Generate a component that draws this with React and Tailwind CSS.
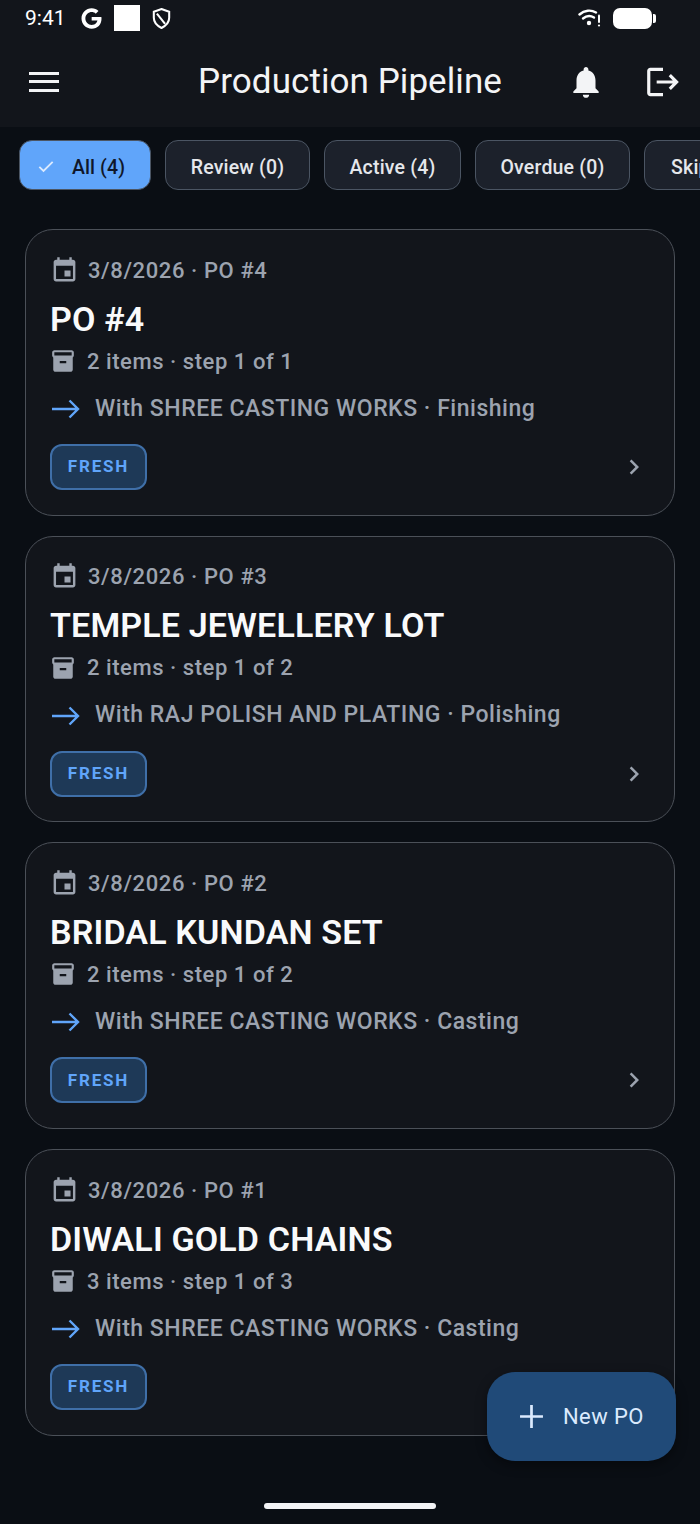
import { FaGoogle } from "react-icons/fa";

const chips = [
  { label: "All (4)", width: "w-[132px]", active: true },
  { label: "Review (0)", width: "w-[145px]" },
  { label: "Active (4)", width: "w-[137px]" },
  { label: "Overdue (0)", width: "w-[155px]" },
  { label: "Skipped (0)", width: "w-[156px]" },
];

const orders = [
  { no: 4, title: "PO #4", items: "2 items · step 1 of 1", route: "With SHREE CASTING WORKS · Finishing" },
  { no: 3, title: "TEMPLE JEWELLERY LOT", items: "2 items · step 1 of 2", route: "With RAJ POLISH AND PLATING · Polishing" },
  { no: 2, title: "BRIDAL KUNDAN SET", items: "2 items · step 1 of 2", route: "With SHREE CASTING WORKS · Casting" },
  { no: 1, title: "DIWALI GOLD CHAINS", items: "3 items · step 1 of 3", route: "With SHREE CASTING WORKS · Casting" },
];

function MaterialIcon({ d, className }) {
  return (
    <svg viewBox="0 0 24 24" fill="currentColor" className={className}>
      <path d={d} />
    </svg>
  );
}

function StatusBar() {
  return (
    <div className="h-[36px] flex items-center justify-between pl-[25px] pr-[44px] text-white">
      <div className="flex items-center">
        <span className="text-[21px] leading-none w-[56px]">9:41</span>
        <FaGoogle className="w-[21px] h-[21px]" />
        <div className="ml-[12px] w-[26px] h-[26px] bg-white" />
        <svg viewBox="1 1 18 20.5" fill="none" stroke="currentColor" strokeWidth="2" className="ml-[12px] w-[19px] h-[21px]">
          <path d="M10 2l7.5 2.6v6c0 4.6-3.2 7.8-7.5 9.9-4.3-2.1-7.5-5.3-7.5-9.9v-6z" />
          <path d="M5.5 6.5l8 10" />
        </svg>
      </div>
      <div className="flex items-center">
        <svg viewBox="0 0 24 20" fill="none" stroke="currentColor" strokeLinecap="round" className="w-[24px] h-[20px]">
          <path d="M1.5 6.5C6.5 2 13 1.5 18 4.5" strokeWidth="2.4" />
          <path d="M5 10.5c3.5-3 7.5-3.2 11-1" strokeWidth="2.4" />
          <circle cx="11" cy="15" r="2.2" fill="currentColor" stroke="none" />
          <path d="M21 7.5v6.5" strokeWidth="2" />
          <circle cx="21" cy="17.5" r="1.1" fill="currentColor" stroke="none" />
        </svg>
        <div className="ml-[11px] w-[39px] h-[21px] bg-white rounded-[7px]" />
        <div className="ml-[1px] w-[3px] h-[9px] bg-white rounded-r-[2px]" />
      </div>
    </div>
  );
}

function Toolbar() {
  return (
    <div className="h-[91px] relative flex items-center justify-between pl-[29px] pr-[18px] text-white">
      <div className="w-[30px] flex flex-col gap-[5.5px]">
        <div className="h-[3px] bg-[#f3f4f6]" />
        <div className="h-[3px] bg-[#f3f4f6]" />
        <div className="h-[3px] bg-[#f3f4f6]" />
      </div>
      <h1 className="absolute left-0 right-0 text-center text-[35px] leading-none text-[#f3f4f6] tracking-[0.07px]">
        Production Pipeline
      </h1>
      <div className="flex items-center gap-[39px] text-[#f3f4f6]">
        <MaterialIcon
          className="w-[38px] h-[38px]"
          d="M12 22c1.1 0 2-.9 2-2h-4c0 1.1.89 2 2 2zm6-6v-5c0-3.07-1.64-5.64-4.5-6.32V4c0-.83-.67-1.5-1.5-1.5s-1.5.67-1.5 1.5v.68C7.63 5.36 6 7.92 6 11v5l-2 2v1h16v-1l-2-2z"
        />
        <MaterialIcon
          className="w-[38px] h-[38px]"
          d="M17 7l-1.41 1.41L18.17 11H8v2h10.17l-2.58 2.58L17 17l5-5zM4 5h8V3H4c-1.1 0-2 .9-2 2v14c0 1.1.9 2 2 2h8v-2H4V5z"
        />
      </div>
    </div>
  );
}

function FilterChips() {
  return (
    <div className="flex gap-[14px] pl-[19px] pt-[13px] overflow-hidden">
      {chips.map((chip) =>
        chip.active ? (
          <div
            key={chip.label}
            className={`${chip.width} h-[50px] shrink-0 flex items-center pl-[16px] pt-[6px] rounded-[13px] bg-[#60a5fa] border border-[#4b5563] text-[19.5px] font-medium text-[#0f172a]`}
          >
            <svg viewBox="0 0 24 24" fill="none" stroke="#dbeafe" strokeWidth="2.2" className="w-[20px] h-[20px] -mt-[5px]">
              <path d="M4 13l5 5L20 7" />
            </svg>
            <span className="ml-[16px] tracking-[0.1px]">{chip.label}</span>
          </div>
        ) : (
          <div
            key={chip.label}
            className={`${chip.width} h-[50px] shrink-0 flex items-center justify-center pt-[6px] rounded-[13px] bg-[#1c212b] border border-[#4b5563] text-[19.5px] font-medium text-[#e5e7eb] tracking-[0.2px]`}
          >
            {chip.label}
          </div>
        )
      )}
    </div>
  );
}

function OrderCard({ order }) {
  return (
    <div className="h-[286.7px] rounded-[28px] border border-[#4b5058] bg-[#12151b] pl-[24px] pr-[30px] pt-[25px]">
      <div className="flex items-center h-[30px] text-[#9ca3af]">
        <MaterialIcon
          className="w-[29px] h-[29px] shrink-0"
          d="M17 12h-5v5h5v-5zM16 1v2H8V1H6v2H5c-1.11 0-1.99.9-1.99 2L3 19c0 1.1.89 2 2 2h14c1.1 0 2-.9 2-2V5c0-1.1-.9-2-2-2h-1V1h-2zm3 18H5V8h14v11z"
        />
        <span className="ml-[9px] text-[22px] font-medium tracking-[0.6px]">3/8/2026 · PO #{order.no}</span>
      </div>
      <div className="mt-[15px] h-[38px] flex items-center text-[34px] font-semibold text-[#f9fafb] tracking-[0.15px]">
        {order.title}
      </div>
      <div className="mt-[8px] h-[30px] flex items-center text-[#9ca3af]">
        <MaterialIcon
          className="w-[26px] h-[26px] shrink-0"
          d="M20 2H4c-1 0-2 .9-2 2v3.01c0 .72.43 1.34 1 1.69V20c0 1.1 1.1 2 2 2h14c.9 0 2-.9 2-2V8.7c.57-.35 1-.97 1-1.69V4c0-1.1-1-2-2-2zm-5 12H9v-2h6v2zm5-7H4V4l16-.02V7z"
        />
        <span className="ml-[11px] text-[22px] font-medium tracking-[0.55px]">{order.items}</span>
      </div>
      <div className="mt-[18px] h-[30px] flex items-center">
        <svg viewBox="0 0 28 20" fill="none" stroke="#60a5fa" strokeWidth="2.4" className="ml-[2px] w-[28px] h-[20px] shrink-0">
          <path d="M0 10h26M17.5 1.5L26 10l-8.5 8.5" />
        </svg>
        <span className="ml-[15px] text-[23px] font-medium text-[#9ca3af] tracking-[0.52px]">{order.route}</span>
      </div>
      <div className="mt-[20px] flex items-center justify-between">
        <div className="w-[97px] h-[46px] flex items-center justify-center rounded-[12px] border-2 border-[#3f6fa8] bg-[#1e3957] text-[17px] font-bold tracking-[1.8px] text-[#60a5fa]">
          FRESH
        </div>
        <MaterialIcon
          className="w-[30px] h-[30px] text-[#9ca3af] -mr-[5px]"
          d="M10 6L8.59 7.41 13.17 12l-4.58 4.59L10 18l6-6z"
        />
      </div>
    </div>
  );
}

export default function App() {
  return (
    <div className="relative min-h-[1524px] bg-[#0a0e14] overflow-hidden font-['Roboto',sans-serif]">
      <div className="bg-[#12151b]">
        <StatusBar />
        <Toolbar />
      </div>
      <FilterChips />
      <div className="flex flex-col gap-[20px] px-[25px] pt-[39px]">
        {orders.map((order) => (
          <OrderCard key={order.no} order={order} />
        ))}
      </div>

      {/* floating button */}
      <div className="absolute left-[487px] top-[1372px] w-[189px] h-[89px] flex items-center pl-[32px] rounded-[28px] bg-[#204a78] text-[#dbeafe] shadow-[0_4px_12px_rgba(0,0,0,0.4)]">
        <svg viewBox="0 0 24 24" fill="none" stroke="currentColor" strokeWidth="2.6" className="w-[25px] h-[25px]">
          <path d="M12 1v22M1 12h22" />
        </svg>
        <span className="ml-[19px] text-[22px] font-normal tracking-[0.4px]">New PO</span>
      </div>

      {/* home indicator */}
      <div className="absolute left-[264px] top-[1503px] w-[172px] h-[6px] rounded-full bg-[#f3f4f6]" />
    </div>
  );
}
